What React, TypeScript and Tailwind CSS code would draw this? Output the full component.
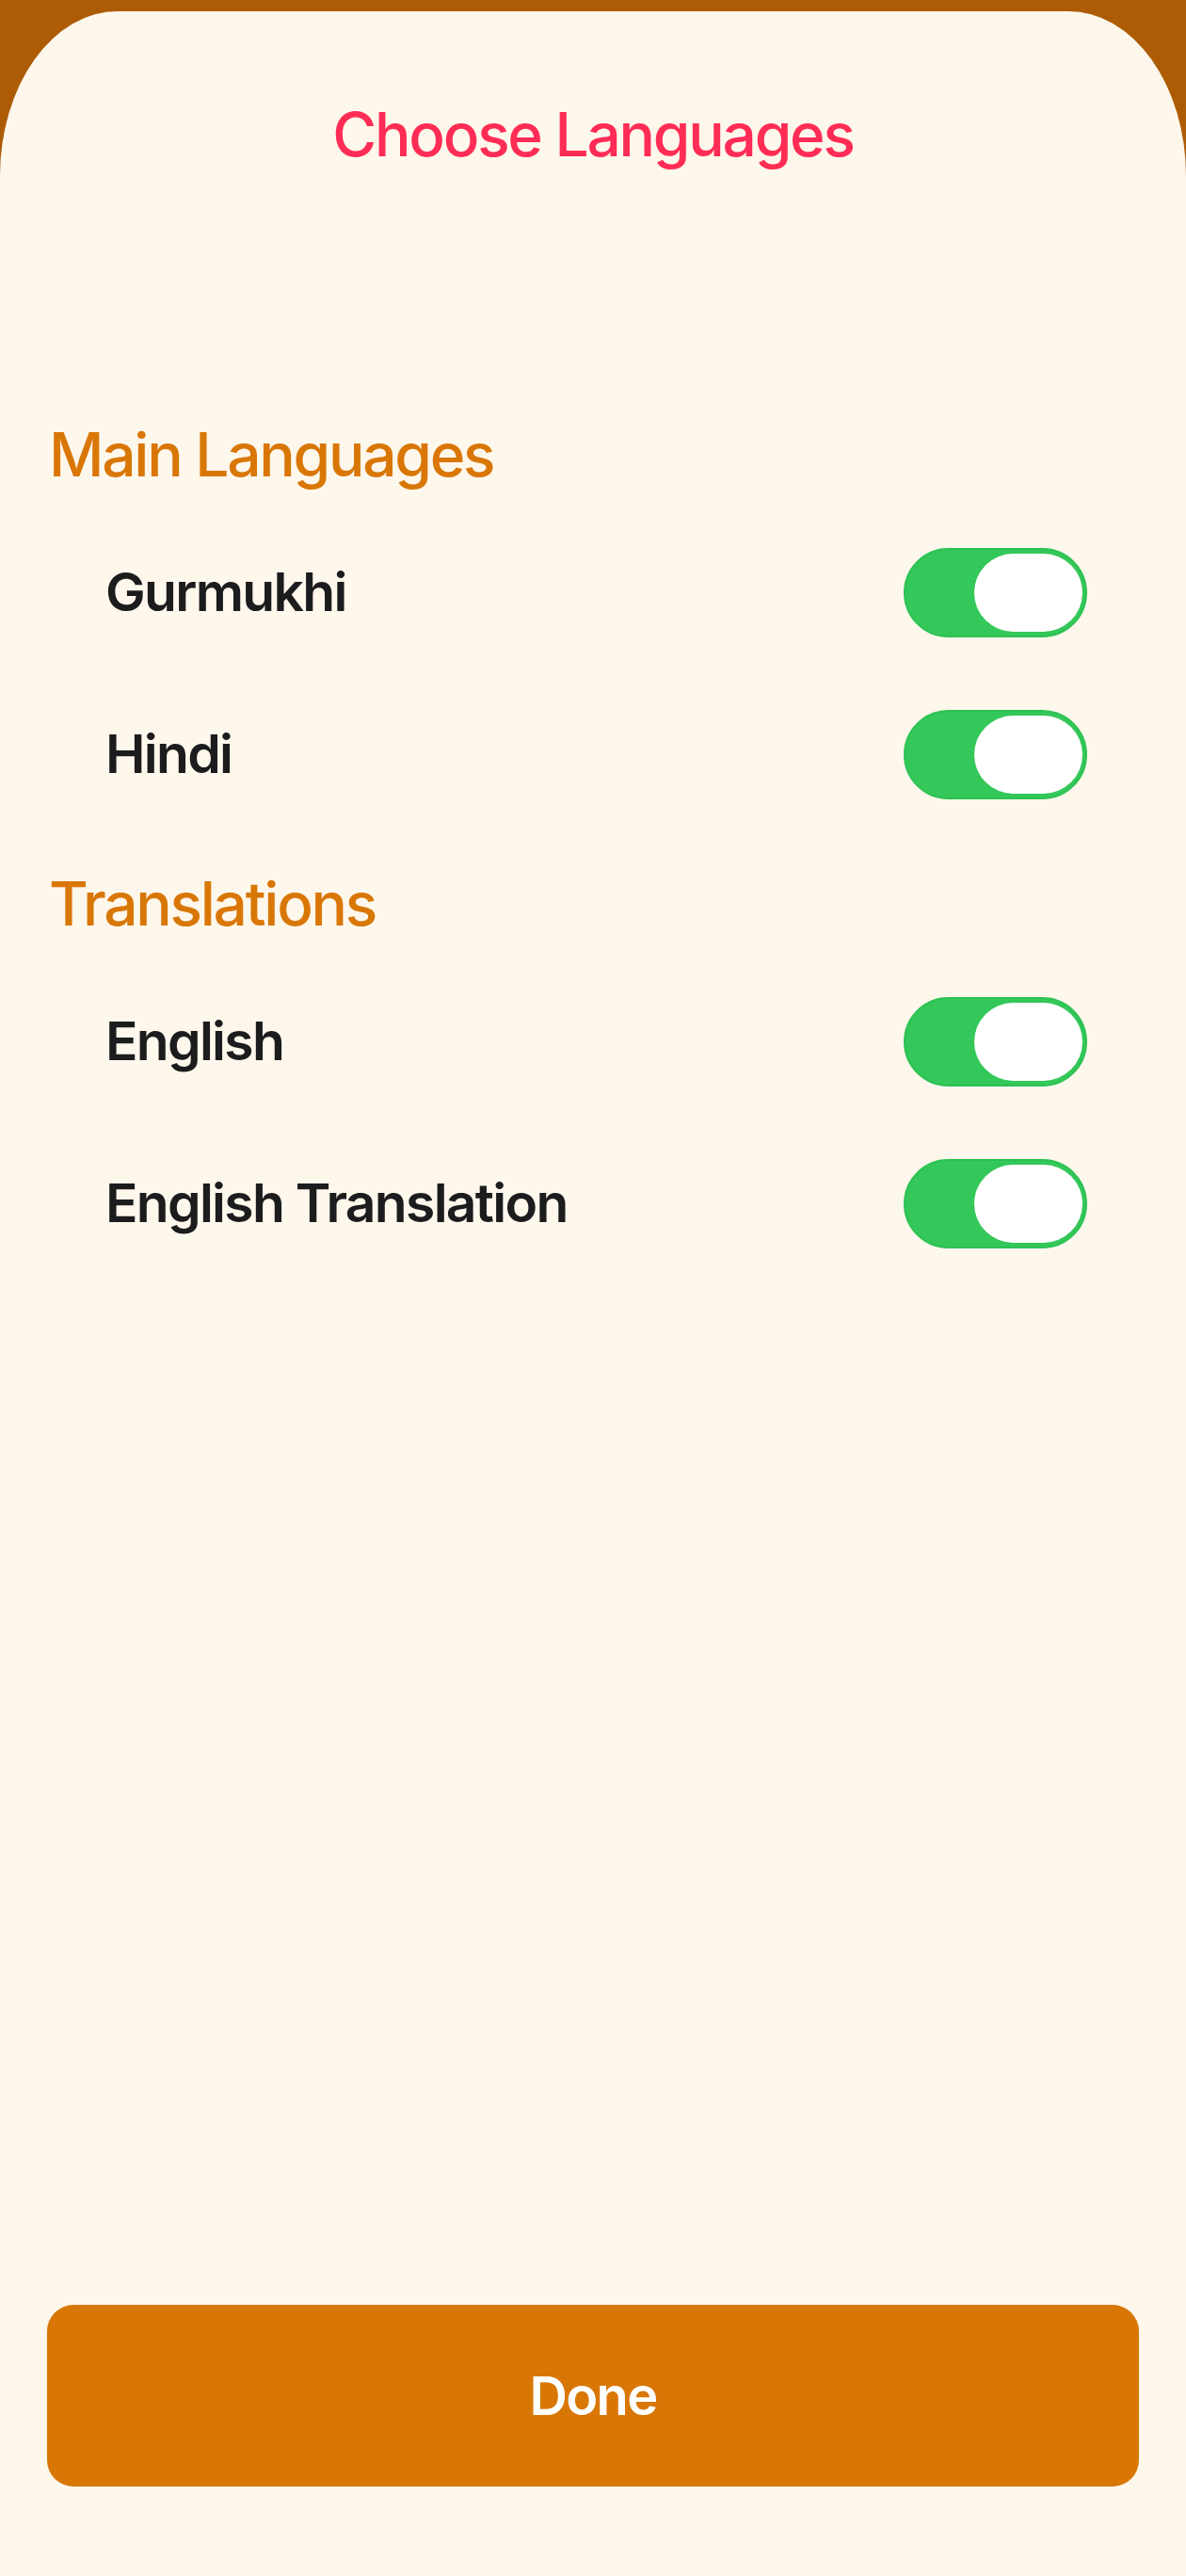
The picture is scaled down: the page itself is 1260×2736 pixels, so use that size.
import { useState } from "react";

type Lang = { id: string; label: string };

const sections: { title: string; items: Lang[] }[] = [
  {
    title: "Main Languages",
    items: [
      { id: "gurmukhi", label: "Gurmukhi" },
      { id: "hindi", label: "Hindi" },
    ],
  },
  {
    title: "Translations",
    items: [
      { id: "english", label: "English" },
      { id: "english-translation", label: "English Translation" },
    ],
  },
];

const Toggle = ({ on, onClick }: { on: boolean; onClick: () => void }) => (
  <button
    onClick={onClick}
    className={`flex h-[95px] w-[195px] shrink-0 items-center rounded-full border-2 px-[3px] ${
      on ? "justify-end border-[#2cc252] bg-[#34c759]" : "justify-start border-[#d9d4cc] bg-[#e6e1d8]"
    }`}
  >
    <span className="block h-[83px] w-[115px] rounded-full bg-white" />
  </button>
);

export default function App() {
  const [enabled, setEnabled] = useState<Record<string, boolean>>({
    gurmukhi: true,
    hindi: true,
    english: true,
    "english-translation": true,
  });

  const flip = (id: string) => setEnabled((s) => ({ ...s, [id]: !s[id] }));

  return (
    <div className="flex min-h-[2736px] flex-col bg-[#ad5c05] pt-[12px] font-['Inter',sans-serif]">
      {/* sheet */}
      <div className="flex flex-1 flex-col rounded-tl-[125px_175px] rounded-tr-[125px_175px] bg-[#fef7ec]">
        <h1 className="mt-[91px] h-[80px] text-center text-[64px] font-medium leading-[80px] tracking-[-0.035em] text-[#ff2d55]">
          Choose Languages
        </h1>

        <div className="mt-[260px] flex flex-col">
          {sections.map((sec, i) => (
            <section key={sec.title} className={i > 0 ? "mt-[33px]" : ""}>
              <h2 className="h-[80px] pl-[52px] text-[64px] font-medium leading-[80px] tracking-[-0.035em] text-[#d97706]">
                {sec.title}
              </h2>
              <div className="mt-[20px]">
                {sec.items.map((it) => (
                  <div key={it.id} className="flex h-[172px] items-center justify-between pl-[112px] pr-[105px]">
                    <span className="text-[57px] font-semibold tracking-[-0.03em] text-[#1c1c1e]">{it.label}</span>
                    <Toggle on={enabled[it.id]} onClick={() => flip(it.id)} />
                  </div>
                ))}
              </div>
            </section>
          ))}
        </div>

        <div className="flex-1" />

        <button className="mx-[50px] mb-[95px] flex h-[193px] items-center justify-center rounded-[28px] bg-[#d97706] text-[56px] font-semibold tracking-[-0.03em] text-white">
          Done
        </button>
      </div>
    </div>
  );
}
